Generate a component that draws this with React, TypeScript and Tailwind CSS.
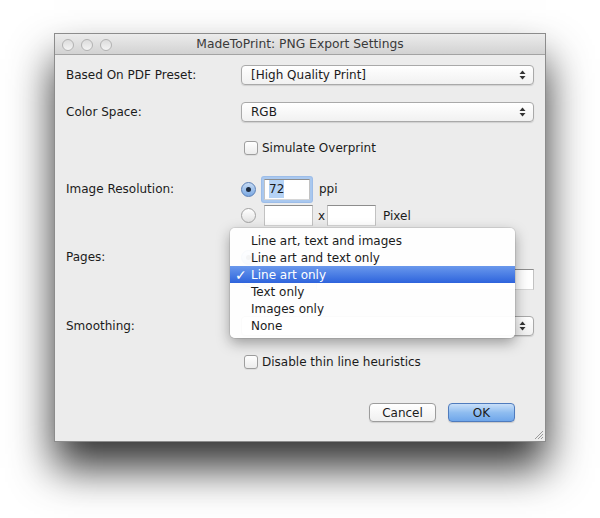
import React from 'react';

const font = { fontFamily: '"DejaVu Sans", "Liberation Sans", sans-serif' };

const Arrows: React.FC = () => (
  <svg width="7" height="10" viewBox="0 0 7 10" className="shrink-0">
    <path d="M3.5 0.5 L6.5 4 L0.5 4 Z" fill="#333" />
    <path d="M3.5 9.5 L6.5 6 L0.5 6 Z" fill="#333" />
  </svg>
);

const Select: React.FC<{ value?: string }> = ({ value }) => (
  <div className="flex h-[20px] w-full items-center justify-between rounded-[4px] border border-[#a9a9a9] bg-gradient-to-b from-white to-[#f1f1f1] pl-[9px] pr-[7px] shadow-[0_1px_1px_rgba(0,0,0,0.12)]">
    <span>{value}</span>
    <Arrows />
  </div>
);

const Checkbox: React.FC<{ label: string }> = ({ label }) => (
  <div className="flex h-[14px] items-center">
    <div className="ml-[3px] h-[14px] w-[14px] rounded-[3px] border border-[#9e9e9e] bg-gradient-to-b from-white to-[#ececec] shadow-[0_1px_0_rgba(0,0,0,0.06)]" />
    <span className="ml-[4px]">{label}</span>
  </div>
);

const Radio: React.FC<{ on?: boolean }> = ({ on }) =>
  on ? (
    <div className="flex h-[15px] w-[15px] shrink-0 items-center justify-center rounded-full border border-[#5a7fb6] bg-gradient-to-b from-[#c6dbf4] to-[#7aa8e2]">
      <div className="h-[5px] w-[5px] rounded-full bg-[#1c2a3d]" />
    </div>
  ) : (
    <div className="h-[15px] w-[15px] shrink-0 rounded-full border border-[#a2a2a2] bg-gradient-to-b from-white to-[#e3e3e3]" />
  );

const Field: React.FC<{ className?: string; children?: React.ReactNode }> = ({ className = '', children }) => (
  <div className={`h-[21px] border border-t-[#8d8d8d] border-x-[#c2c2c2] border-b-[#d6d6d6] bg-white ${className}`}>{children}</div>
);

const menuItems = [
  'Line art, text and images',
  'Line art and text only',
  'Line art only',
  'Text only',
  'Images only',
  'None',
];

export default function App() {
  return (
    <div className="min-h-[518px] w-[600px] bg-white pl-[54px] pt-[33px] text-[12px] text-[#1b1b1b]" style={font}>
      <div className="relative h-[409px] w-[492px] overflow-visible border border-[#8c8c8c] bg-[#ececec] shadow-[0_26px_40px_rgba(0,0,0,0.8)]">
        {/* title bar */}
        <div className="relative flex h-[21px] items-center justify-center rounded-t-[4px] border-b border-[#a3a3a3] bg-gradient-to-b from-[#ececec] to-[#d2d2d2]">
          <div className="absolute left-[7px] top-[5px] flex gap-[7px]">
            <div className="h-[12px] w-[12px] rounded-full border border-[#b2b2b2] bg-gradient-to-b from-[#dcdcdc] to-[#f4f4f4]" />
            <div className="h-[12px] w-[12px] rounded-full border border-[#b2b2b2] bg-gradient-to-b from-[#dcdcdc] to-[#f4f4f4]" />
            <div className="h-[12px] w-[12px] rounded-full border border-[#b2b2b2] bg-gradient-to-b from-[#dcdcdc] to-[#f4f4f4]" />
          </div>
          <span className="text-[12.3px] text-[#3a3a3a]">MadeToPrint: PNG Export Settings</span>
        </div>

        {/* body */}
        <div className="flex flex-col pl-[11px] pr-[11px]">
          <div className="mt-[10px] flex h-[20px] items-center">
            <div className="w-[175px]">Based On PDF Preset:</div>
            <div className="flex-1"><Select value="[High Quality Print]" /></div>
          </div>
          <div className="mt-[17px] flex h-[20px] items-center">
            <div className="w-[175px]">Color Space:</div>
            <div className="flex-1"><Select value="RGB" /></div>
          </div>
          <div className="mt-[19px] flex items-center">
            <div className="w-[175px]" />
            <Checkbox label="Simulate Overprint" />
          </div>

          <div className="mt-[23px] flex h-[22px] items-center">
            <div className="w-[175px]">Image Resolution:</div>
            <Radio on />
            <div className="ml-[6px] rounded-[2px] bg-[#a9c8ef] p-[2px] shadow-[0_0_0_1px_#9dbde8]">
              <Field className="flex w-[46px] items-center border-[#7a9dd0] pl-[4px]">
                <span className="bg-[#b5d3f5]">72</span>
              </Field>
            </div>
            <span className="ml-[7px]">ppi</span>
          </div>
          <div className="mt-[4px] flex h-[23px] items-center">
            <div className="w-[175px]" />
            <Radio />
            <Field className="ml-[8px] w-[49px]" />
            <span className="ml-[5px] w-[9px]">x</span>
            <Field className="w-[49px]" />
            <span className="ml-[7px]">Pixel</span>
          </div>

          <div className="mt-[21px] flex h-[18px] items-center">
            <div className="w-[175px]">Pages:</div>
            <Radio on />
          </div>
          <div className="mt-[2px] flex h-[22px] items-center">
            <div className="w-[175px]" />
            <Radio />
            <Field className="ml-[60px] flex-1" />
          </div>

          <div className="mt-[26px] flex h-[20px] items-center">
            <div className="w-[175px]">Smoothing:</div>
            <div className="flex-1"><Select /></div>
          </div>
          <div className="mt-[19px] flex items-center">
            <div className="w-[175px]" />
            <Checkbox label="Disable thin line heuristics" />
          </div>

          <div className="mt-[34px] flex justify-end gap-[12px] pr-[19px]">
            <div className="flex h-[19px] w-[67px] items-center justify-center rounded-[4px] border border-[#9c9c9c] bg-gradient-to-b from-white to-[#f0f0f0] shadow-[0_1px_1px_rgba(0,0,0,0.12)]">
              Cancel
            </div>
            <div className="flex h-[19px] w-[67px] items-center justify-center rounded-[4px] border border-[#4f7bbd] bg-gradient-to-b from-[#c9dff8] via-[#8fbdf0] to-[#6fa6ea] shadow-[0_1px_1px_rgba(0,0,0,0.15)]">
              OK
            </div>
          </div>
        </div>

        {/* resize grip */}
        <svg className="absolute bottom-[1px] right-[1px]" width="11" height="11" viewBox="0 0 11 11">
          <path d="M10 2 L2 10 M10 5 L5 10 M10 8 L8 10" stroke="#9a9a9a" strokeWidth="1" />
        </svg>

        {/* popup menu */}
        <div className="absolute left-[175px] top-[194px] w-[285px] rounded-[5px] bg-white/95 py-[4px] shadow-[0_5px_14px_rgba(0,0,0,0.35),0_0_0_1px_rgba(0,0,0,0.08)]">
          {menuItems.map((item, i) =>
            i === 2 ? (
              <div key={item} className="relative flex h-[17px] items-center bg-gradient-to-b from-[#6a98ec] to-[#2e63dc] pl-[21px] text-white">
                <span className="absolute left-[5px] top-[-1px] text-[14px] font-bold">✓</span>
                {item}
              </div>
            ) : (
              <div key={item} className="flex h-[17px] items-center pl-[21px]">
                {item}
              </div>
            )
          )}
        </div>
      </div>
    </div>
  );
}
